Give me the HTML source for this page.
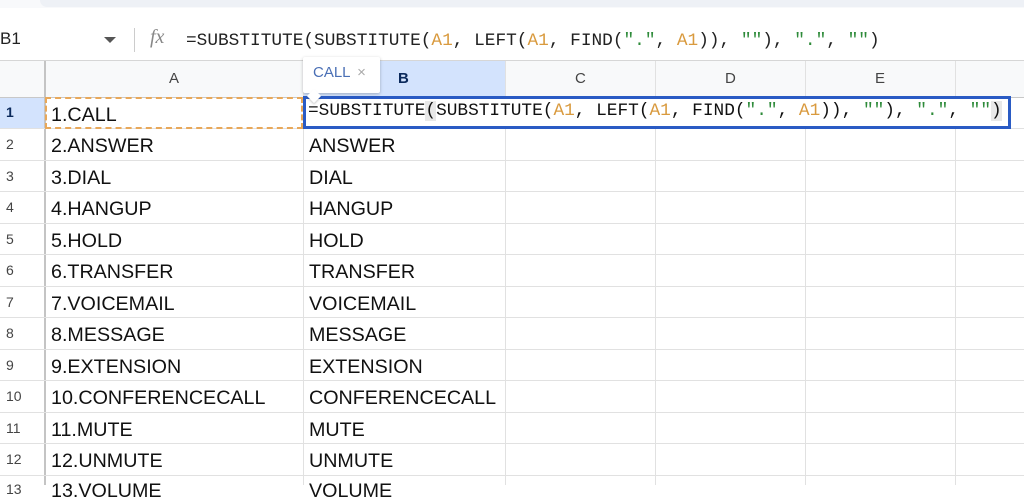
<!DOCTYPE html>
<html><head><style>
*{margin:0;padding:0;box-sizing:border-box}
body{width:1024px;height:485px;overflow:hidden;background:#fff;font-family:"Liberation Sans",Arial,sans-serif;position:relative}
.abs{position:absolute}
.mono{font-family:"Liberation Mono",monospace}
.o{color:#d99a3e}.g{color:#2e8b3a}
.hl{position:absolute;left:0;width:1024px;height:1px;background:#e1e1e1}
.vl{position:absolute;top:61px;height:424px;width:1px;background:#e1e1e1}
.rn{position:absolute;left:0;width:45px;font-size:14px;color:#444;padding-left:6px}
.c{position:absolute;font-size:19.7px;color:#111}
</style></head><body>
<div class="abs" style="left:0;top:0;width:1024px;height:8px;background:#f8f9fb"></div>
<div class="abs" style="left:40px;top:0;width:984px;height:7px;background:#eef1f6;border-radius:0 0 0 14px"></div>
<div class="abs" style="left:0;top:29px;font-size:17px;color:#222">B1</div>
<div class="abs" style="left:104px;top:37px;width:0;height:0;border-left:6px solid transparent;border-right:6px solid transparent;border-top:6px solid #555"></div>
<div class="abs" style="left:134px;top:28px;width:1px;height:24px;background:#ccc"></div>
<div class="abs" style="left:150px;top:26px;font-size:20px;color:#888;font-style:italic;font-family:'Liberation Serif',serif">fx</div>
<div class="abs mono" style="left:186px;top:31px;font-size:17.8px;color:#222;white-space:pre">=SUBSTITUTE(SUBSTITUTE(<span class="o">A1</span>, LEFT(<span class="o">A1</span>, FIND(<span class="g">"."</span>, <span class="o">A1</span>)), <span class="g">""</span>), <span class="g">"."</span>, <span class="g">""</span>)</div>
<div class="abs" style="left:0;top:61px;width:1024px;height:36px;background:#f8f9fa"></div>
<div class="abs" style="left:0;top:97px;width:45px;height:31px;background:#d3e3fd"></div>
<div class="abs" style="left:303px;top:61px;width:202px;height:36px;background:#d3e3fd"></div>
<div class="hl" style="top:60px;background:#d6d6d6"></div>
<div class="hl" style="top:97px;background:#c8c8c8"></div>
<div class="abs" style="left:44px;top:61px;width:2px;height:424px;background:#c4c4c4"></div>
<div class="vl" style="left:303px"></div>
<div class="vl" style="left:505px"></div>
<div class="vl" style="left:655px"></div>
<div class="vl" style="left:805px"></div>
<div class="vl" style="left:955px"></div>
<div class="abs" style="left:169px;top:70px;font-size:15px;color:#444">A</div>
<div class="abs" style="left:398px;top:70px;font-size:15px;color:#0b2a5c;font-weight:bold">B</div>
<div class="abs" style="left:575px;top:70px;font-size:15px;color:#444">C</div>
<div class="abs" style="left:725px;top:70px;font-size:15px;color:#444">D</div>
<div class="abs" style="left:875px;top:70px;font-size:15px;color:#444">E</div>
<div class="hl" style="top:128px"></div><div class="hl" style="top:160px"></div><div class="hl" style="top:191px"></div><div class="hl" style="top:223px"></div><div class="hl" style="top:254px"></div><div class="hl" style="top:286px"></div><div class="hl" style="top:317px"></div><div class="hl" style="top:349px"></div><div class="hl" style="top:380px"></div><div class="hl" style="top:412px"></div><div class="hl" style="top:443px"></div><div class="hl" style="top:475px"></div>
<div class="rn" style="top:104px;font-weight:bold;color:#0b2a5c">1</div>
<div class="rn" style="top:136px">2</div><div class="rn" style="top:168px">3</div><div class="rn" style="top:199px">4</div><div class="rn" style="top:231px">5</div><div class="rn" style="top:262px">6</div><div class="rn" style="top:294px">7</div><div class="rn" style="top:325px">8</div><div class="rn" style="top:357px">9</div><div class="rn" style="top:388px">10</div><div class="rn" style="top:420px">11</div><div class="rn" style="top:451px">12</div><div class="rn" style="top:481px">13</div>
<div class="abs" style="left:45px;top:97px;width:258px;height:32px;border:2px dashed #e8a85a"></div>
<div class="c" style="left:51px;top:104px">1.CALL</div>
<div class="c" style="left:51px;top:135px">2.ANSWER</div><div class="c" style="left:309px;top:135px">ANSWER</div>
<div class="c" style="left:51px;top:167px">3.DIAL</div><div class="c" style="left:309px;top:167px">DIAL</div>
<div class="c" style="left:51px;top:198px">4.HANGUP</div><div class="c" style="left:309px;top:198px">HANGUP</div>
<div class="c" style="left:51px;top:230px">5.HOLD</div><div class="c" style="left:309px;top:230px">HOLD</div>
<div class="c" style="left:51px;top:261px">6.TRANSFER</div><div class="c" style="left:309px;top:261px">TRANSFER</div>
<div class="c" style="left:51px;top:293px">7.VOICEMAIL</div><div class="c" style="left:309px;top:293px">VOICEMAIL</div>
<div class="c" style="left:51px;top:324px">8.MESSAGE</div><div class="c" style="left:309px;top:324px">MESSAGE</div>
<div class="c" style="left:51px;top:356px">9.EXTENSION</div><div class="c" style="left:309px;top:356px">EXTENSION</div>
<div class="c" style="left:51px;top:387px">10.CONFERENCECALL</div><div class="c" style="left:309px;top:387px">CONFERENCECALL</div>
<div class="c" style="left:51px;top:419px">11.MUTE</div><div class="c" style="left:309px;top:419px">MUTE</div>
<div class="c" style="left:51px;top:450px">12.UNMUTE</div><div class="c" style="left:309px;top:450px">UNMUTE</div>
<div class="c" style="left:51px;top:480px">13.VOLUME</div><div class="c" style="left:309px;top:480px">VOLUME</div>
<div class="abs" style="left:303px;top:96px;width:708px;height:33px;border:3px solid #2a5bc4;background:#fff"></div>
<div class="abs mono" style="left:308px;top:101px;font-size:17.8px;color:#111;white-space:pre">=SUBSTITUTE<span style="background:#e8e8e8">(</span>SUBSTITUTE(<span class="o">A1</span>, LEFT(<span class="o">A1</span>, FIND(<span class="g">"."</span>, <span class="o">A1</span>)), <span class="g">""</span>), <span class="g">"."</span>, <span class="g">""</span><span style="background:#e8e8e8">)</span></div>
<div class="abs" style="left:303px;top:57px;width:77px;height:36px;background:#fff;box-shadow:0 1px 3px rgba(0,0,0,.25);border-radius:2px"></div>
<div class="abs" style="left:309px;top:91px;width:10px;height:10px;background:#fff;transform:rotate(45deg);box-shadow:1px 1px 2px rgba(0,0,0,.2)"></div>
<div class="abs" style="left:313px;top:64px;font-size:15px;color:#4a6fb5">CALL <span style="color:#aaa;margin-left:3px">×</span></div>
</body></html>
